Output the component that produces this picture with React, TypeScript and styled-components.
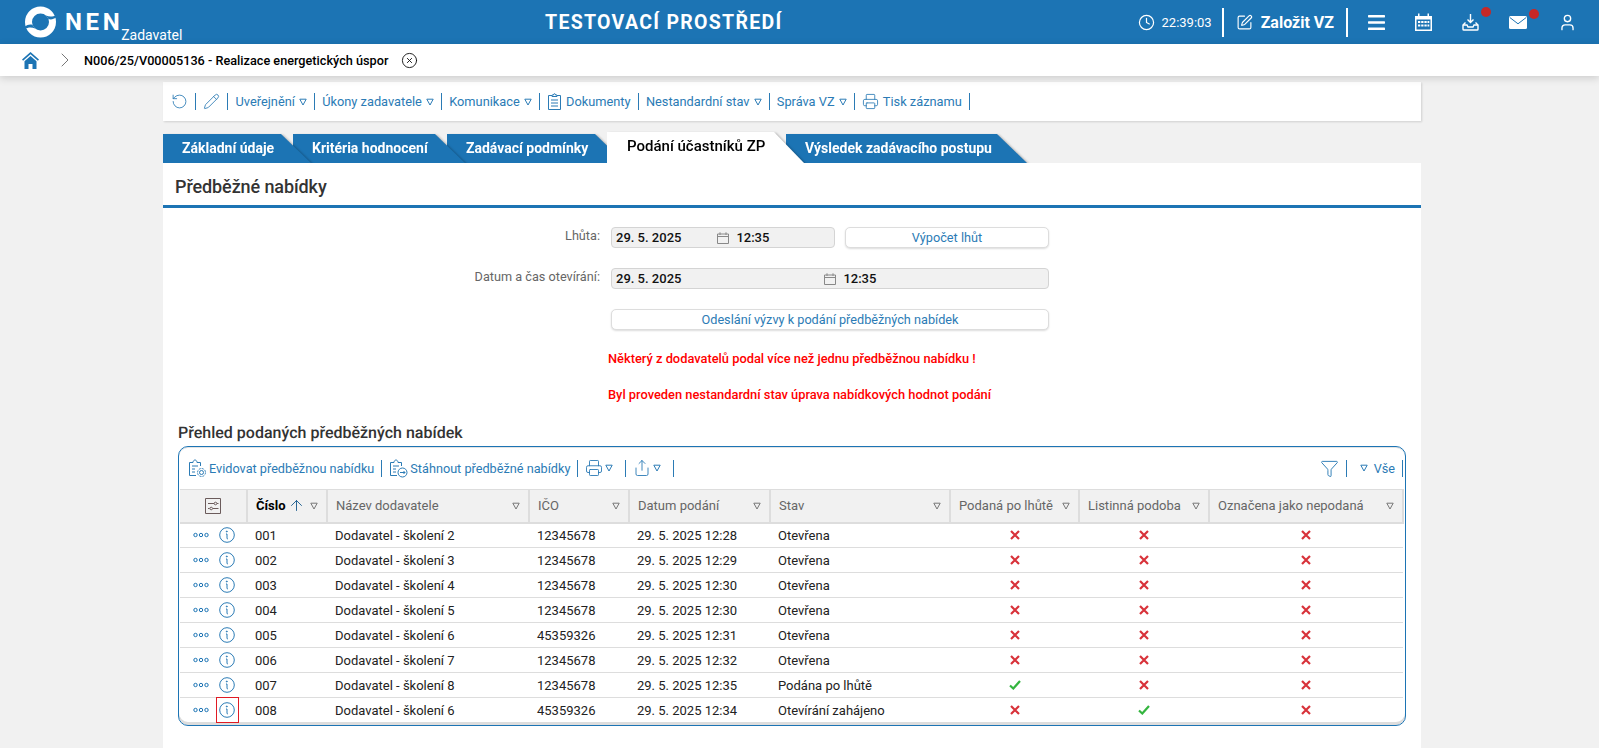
import React from "react";
import styled, { createGlobalStyle } from "styled-components";
import {
  ArrowUp, ChevronRight, CircleX, Clock, Funnel, Pencil, Printer, RotateCcw, Share, SquarePen, User,
} from "lucide-react";

const BLUE = "#1c74b4";
const LINK = "#2b7bb5";

const GlobalStyle = createGlobalStyle`
  html, body { margin: 0; padding: 0; background: #f1f1f1; }
  body { font-family: Roboto, "Liberation Sans", sans-serif; font-size: 13px; color: #222; overflow: hidden; }
`;

const Page = styled.div`
  width: 1599px;
  height: 748px;
  overflow: hidden;
  display: flex;
  flex-direction: column;
`;

const TopBar = styled.header`
  height: 44px;
  flex: none;
  background: ${BLUE};
  color: #fff;
  display: flex;
  align-items: center;
`;

const Brand = styled.div`
  width: 545px;
  flex: none;
  height: 44px;
  padding-left: 25px;
  box-sizing: border-box;
  display: flex;
  align-items: center;
`;

const BrandName = styled.span`
  margin-left: 9px;
  font-size: 24px;
  font-weight: 700;
  letter-spacing: 3.6px;
`;

const BrandRole = styled.span`
  align-self: flex-end;
  margin-left: -2px;
  padding-bottom: 1px;
  font-size: 14px;
  line-height: 16px;
`;

const EnvTitle = styled.div`
  font-size: 19.5px;
  font-weight: 700;
  letter-spacing: 1.3px;
`;

const TopActions = styled.div`
  margin-left: auto;
  padding-right: 22px;
  display: flex;
  align-items: center;
  height: 44px;
`;

const ClockText = styled.span`
  margin: 0 10px 0 7px;
  font-size: 13px;
`;

const TopDivider = styled.span`
  width: 2px;
  height: 29px;
  background: #fff;
`;

const CreateLabel = styled.span`
  margin: 0 12px 0 8px;
  font-size: 16px;
  font-weight: 700;
`;

const TopIcon = styled.span<{ $gap: number; $badge?: boolean }>`
  position: relative;
  margin-left: ${(p) => p.$gap}px;
  display: flex;
  &::after {
    content: "";
    display: ${(p) => (p.$badge ? "block" : "none")};
    position: absolute;
    top: -7px;
    right: -12px;
    width: 10px;
    height: 10px;
    border-radius: 50%;
    background: #c62828;
  }
`;

const Crumbs = styled.nav`
  height: 32px;
  flex: none;
  background: #fff;
  box-shadow: 0 2px 8px rgba(0, 0, 0, 0.16);
  display: flex;
  align-items: center;
  padding-left: 22px;
  position: relative;
  z-index: 2;
`;

const CrumbChevron = styled.span`
  margin: 0 7px 0 14px;
  display: flex;
  color: #777;
`;

const CrumbText = styled.span`
  font-size: 12.7px;
  font-weight: 500;
  color: #000;
  margin-right: 13px;
`;

const CloseIcon = styled(CircleX)`
  color: #111;
`;

const Main = styled.main`
  width: 1258px;
  margin: 6px 0 0 163px;
  flex: 1;
  display: flex;
  flex-direction: column;
`;

const Toolbar = styled.div`
  height: 39px;
  flex: none;
  background: #fff;
  box-shadow: 1px 1px 2px rgba(0, 0, 0, 0.14);
  display: flex;
  align-items: center;
  padding-left: 8px;
`;

const ToolItem = styled.span`
  display: flex;
  align-items: center;
  gap: 4px;
  color: ${LINK};
  font-size: 12.8px;
  white-space: nowrap;
  padding: 0 7.15px;
  height: 17px;
  border-right: 1px solid ${LINK};
  &:first-child { padding-left: 0; }
`;

const TabRow = styled.div`
  margin-top: 12px;
  height: 30px;
  flex: none;
  display: flex;
  align-items: flex-end;
`;

const Tab = styled.div<{ $active?: boolean; $width: number; $z: number }>`
  position: relative;
  z-index: ${(p) => p.$z};
  flex: none;
  width: ${(p) => p.$width}px;
  margin-right: -${(p) => p.$width - (p.$active ? 179 : p.$width - 18)}px;
  height: ${(p) => (p.$active ? 31 : 29)}px;
  filter: drop-shadow(2px 1px 1px rgba(0, 0, 0, 0.28));
  font-size: ${(p) => (p.$active ? 15 : 14)}px;
  font-weight: ${(p) => (p.$active ? 500 : 700)};
  color: ${(p) => (p.$active ? "#000" : "#fff")};
  line-height: 29px;
  &::before {
    content: "";
    position: absolute;
    inset: 0;
    background: ${(p) => (p.$active ? "#fff" : BLUE)};
    clip-path: polygon(0 0, calc(100% - 30px) 0, 100% 100%, 0 100%);
  }
  & > span { position: relative; margin-left: ${(p) => (p.$active ? 20 : 19)}px; }
`;

const Sheet = styled.section`
  flex: 1;
  background: #fff;
  position: relative;
  z-index: 8;
  display: flex;
  flex-direction: column;
`;

const SheetTitle = styled.h1`
  margin: 0;
  height: 42px;
  flex: none;
  border-bottom: 3px solid ${BLUE};
  padding-left: 12px;
  font-size: 18px;
  font-weight: 500;
  letter-spacing: -0.1px;
  line-height: 48px;
  color: #333;
`;

const Form = styled.div`
  display: grid;
  grid-template-columns: 448px 224px 10px 204px;
  grid-auto-rows: 21px;
  row-gap: 20px;
  align-items: center;
  margin-top: 19px;
`;

const FieldLabel = styled.label`
  grid-column: 1;
  text-align: right;
  color: #666;
  font-size: 12.7px;
  padding-right: 11px;
  margin-top: -5px;
`;

const DateInput = styled.div<{ $wide?: boolean; $gap: number }>`
  grid-column: ${(p) => (p.$wide ? "2 / 5" : "2")};
  height: 21px;
  box-sizing: border-box;
  background: #f1f1f1;
  border: 1px solid #d4d4d4;
  border-radius: 4px;
  display: flex;
  align-items: center;
  padding-left: 4px;
  font-size: 13px;
  font-weight: 500;
  color: #111;
  & > svg { margin-left: ${(p) => p.$gap}px; margin-right: 7px; color: #888; }
`;

const GhostButton = styled.button<{ $wide?: boolean }>`
  grid-column: ${(p) => (p.$wide ? "2 / 5" : "4")};
  height: 21px;
  padding: 0;
  background: #fff;
  border: 1px solid #ddd;
  border-radius: 5px;
  box-shadow: 0 1px 2px rgba(0, 0, 0, 0.14);
  color: ${LINK};
  font: 400 12.7px Roboto, sans-serif;
`;

const Messages = styled.div`
  margin: 21px 0 0 445px;
  display: flex;
  flex-direction: column;
  gap: 21px;
`;

const Warning = styled.p`
  margin: 0;
  color: #f00;
  font-size: 12.85px;
  font-weight: 500;
  line-height: 15px;
`;

const GridTitle = styled.h2`
  margin: 21px 0 0 15px;
  font-size: 16px;
  font-weight: 500;
  text-rendering: geometricPrecision;
  line-height: 20px;
  color: #333;
`;

const GridPanel = styled.div`
  margin: 3px 15px 0 15px;
  height: 280px;
  box-sizing: border-box;
  border: 1.5px solid ${BLUE};
  border-radius: 10px;
  box-shadow: inset 0 -3px 0 #ddd, inset 0 1px 0 #e4e4e4;
  padding: 0 1px;
  overflow: hidden;
`;

const GridBar = styled.div`
  height: 42px;
  display: flex;
  align-items: center;
  justify-content: space-between;
  padding: 0 1px 0 8px;
`;

const GridTools = styled.div`
  display: flex;
  align-items: center;
`;

const GridTool = styled.span<{ $menu?: boolean }>`
  display: flex;
  align-items: center;
  gap: 2px;
  height: 17px;
  padding: 0 ${(p) => (p.$menu ? 12 : 7)}px 0 7px;
  border-right: 1px solid ${LINK};
  color: ${LINK};
  font-size: 12.7px;
  white-space: nowrap;
  &:first-child { padding-left: 0; }
`;

const FilterTools = styled(GridTools)`
  & > span:last-child { padding-left: 13px; }
`;

const Table = styled.table`
  width: 1223px;
  table-layout: fixed;
  border-collapse: collapse;
`;

const HeadCell = styled.th<{ $sorted?: boolean }>`
  height: 33px;
  box-sizing: border-box;
  background: #f1f1f1;
  border: 1px solid #ddd;
  border-width: 1px 2px 2px 0;
  padding: 0 8px;
  text-align: left;
  font-size: 13px;
  font-weight: ${(p) => (p.$sorted ? 700 : 400)};
  color: ${(p) => (p.$sorted ? "#000" : "#666")};
`;

const HeadInner = styled.div`
  display: flex;
  align-items: center;
  justify-content: space-between;
`;

const HeadIconWrap = styled.div`
  display: flex;
  justify-content: center;
`;

const Row = styled.tr`
  height: 25px;
  border-bottom: 1px solid #ddd;
  &:last-child { border-bottom: 0; }
`;

const Cell = styled.td<{ $center?: boolean }>`
  padding: 0 8px;
  box-sizing: border-box;
  font-size: 13px;
  color: #222;
  white-space: nowrap;
  text-align: ${(p) => (p.$center ? "center" : "left")};
  & > svg { vertical-align: middle; margin-bottom: 3px; }
`;

const ActionCell = styled.td`
  padding: 0;
`;

const ActionWrap = styled.div`
  display: flex;
  align-items: center;
  padding-left: 13px;
  gap: 10px;
`;

const InfoBox = styled.span<{ $marked?: boolean }>`
  position: relative;
  display: flex;
  &::after {
    content: "";
    display: ${(p) => (p.$marked ? "block" : "none")};
    position: absolute;
    inset: -5px -4px -5px -3px;
    border: 1px solid #e01b24;
  }
`;

const ArrowIcon = styled(ArrowUp)`
  margin-left: 2px;
  color: #17598c;
`;

const SortWrap = styled.span`
  display: flex;
  align-items: center;
`;

const HeadTri = styled.span`
  display: flex;
  color: #777;
  margin-left: 4px;
`;

const Logo = () => (
  <svg width="31" height="32" viewBox="0 0 31 32">
    <circle cx="15.500" cy="16" r="15.500" fill="#fff" />
    <circle cx="15.500" cy="16" r="8.500" fill={BLUE} />
    <path fill={BLUE} d="M31 9C28 11 24 11 21 9.500L23.500 13C26 14 29 13 31 11.500Z" />
    <path fill={BLUE} d="M0 23C3 21 7 21 10 22.500L7.500 19C5 18 2 19 0 20.500Z" />
  </svg>
);

const HomeIcon = () => (
  <svg width="17" height="17" viewBox="0 0 17 17">
    <path fill={BLUE} d="M8.500 0 0 7.500 1.100 8.800 8.500 2.300l7.400 6.500L17 7.500Z" />
    <path fill={BLUE} d="M2.500 9.200 8.500 4l6 5.200V17H10.500v-5h-4v5H2.500Z" />
  </svg>
);

const BarsIcon = () => (
  <svg width="17" height="15" viewBox="0 0 17 15" fill="#fff">
    <rect y="0" width="17" height="2.400" rx=".6" />
    <rect y="6.300" width="17" height="2.400" rx=".6" />
    <rect y="12.600" width="17" height="2.400" rx=".6" />
  </svg>
);

const CalendarIcon = () => (
  <svg width="17" height="18" viewBox="0 0 17 18">
    <path fill="#fff" d="M0 3h3V.5h1.500V3h8V.5H14V3h3v15H0Z" />
    <path fill={BLUE} d="M1.500 6.500h14V16.500h-14Z" />
    <path fill="#fff" d="M3 8h2.300v2H3ZM6.200 8h2.300v2H6.200ZM9.400 8h2.300v2H9.400ZM12.500 8h1.800v2h-1.800ZM3 11.500h2.300v2H3ZM6.200 11.500h2.300v2H6.200ZM9.400 11.500h2.300v2H9.400ZM12.500 11.500h1.800v2h-1.800Z" />
  </svg>
);

const TrayIcon = () => (
  <svg width="17" height="17" viewBox="0 0 17 17" fill="none" stroke="#fff" strokeWidth="1.400">
    <path d="M8.500 0v8M5.500 5.500l3 3 3-3" />
    <path d="M3.500 8.500 1 11v4.200c0 .5.300.8.800.8h13.400c.5 0 .8-.3.800-.8V11l-2.500-2.500" />
    <path d="M1 11h4l1 2h5l1-2h4" />
  </svg>
);

const MailIcon = () => (
  <svg width="18" height="13" viewBox="0 0 18 13">
    <rect width="18" height="13" rx="1.500" fill="#fff" />
    <path d="M.8 1.500 9 7.800l8.200-6.300" fill="none" stroke={BLUE} strokeWidth="1" />
  </svg>
);

const Tri = ({ size = 8 }: { size?: number }) => (
  <svg width={size} height={size} viewBox="0 0 8 8" fill="none" stroke="currentColor" strokeWidth="1">
    <path d="M.8 1.200h6.400L4 7Z" />
  </svg>
);

const SmallCalendar = () => (
  <svg width="12" height="12" viewBox="0 0 12 12" fill="none" stroke="currentColor" strokeWidth="1">
    <path d="M.5 2h11v9.500H.5ZM.5 4.500h11M3 .3V3M9 .3V3" />
  </svg>
);

const Dots = () => (
  <svg width="16" height="6" viewBox="0 0 16 6" fill="none" stroke={BLUE} strokeWidth="1">
    <circle cx="2.500" cy="3" r="1.700" />
    <circle cx="8" cy="3" r="1.700" />
    <circle cx="13.500" cy="3" r="1.700" />
  </svg>
);

const InfoIcon = () => (
  <svg width="16" height="16" viewBox="0 0 16 16" fill="none" stroke={LINK} strokeWidth="1">
    <circle cx="8" cy="8" r="7.300" />
    <circle cx="7.800" cy="4.500" r=".5" fill={LINK} />
    <path d="M7 7h1v4.200c0 .6.400.8 1 .7" />
  </svg>
);

const Cross = () => (
  <svg width="10" height="10" viewBox="0 0 10 10" fill="none" stroke="#d8323a" strokeWidth="2.200">
    <path d="M1 1l8 8M9 1l-8 8" />
  </svg>
);

const Tick = () => (
  <svg width="12" height="10" viewBox="0 0 12 10" fill="none" stroke="#34b53f" strokeWidth="2.200">
    <path d="M1 5.500 4.300 8.500 11 1" />
  </svg>
);

const ColumnsIcon = () => (
  <svg width="16" height="16" viewBox="0 0 16 16" fill="none" stroke="#6b5b5b" strokeWidth="1">
    <path d="M.5.500h15v15H.5Z" />
    <path d="M3 5.500h6M12 5.500h1.500M3 10.500h1.500M8 10.500h5.500" />
    <circle cx="10.500" cy="5.500" r="1.300" />
    <circle cx="6.200" cy="10.500" r="1.300" />
  </svg>
);

const ClipGear = () => (
  <svg width="19" height="19" viewBox="0 0 19 19" fill="none" stroke={LINK} strokeWidth="1">
    <path d="M8 16.500H1.500v-13H5c0-1.500 1-2.500 2-2.500s2 1 2 2.500h3.500V7" />
    <path d="M4 7h6M4 10h3M4 13h3" />
    <circle cx="13.500" cy="13.500" r="2" />
    <circle cx="13.500" cy="13.500" r="4" strokeDasharray="2 1.100" />
  </svg>
);

const ClipArrow = () => (
  <svg width="19" height="19" viewBox="0 0 19 19" fill="none" stroke={LINK} strokeWidth="1">
    <path d="M8 16.500H1.500v-13H5c0-1.500 1-2.500 2-2.500s2 1 2 2.500h3.500V7" />
    <path d="M4 7h6M4 10h3M4 13h3" />
    <circle cx="13.500" cy="13.500" r="4.500" />
    <path d="M11 13.500h5M14.500 12l1.500 1.500-1.500 1.500" />
  </svg>
);

const DocIcon = () => (
  <svg width="15" height="17" viewBox="0 0 14 17" fill="none" stroke={LINK} strokeWidth="1">
    <path d="M4.500 2.500H1v14h12v-14H9.500" />
    <path d="M4.500 3.500V2H6c0-1.800 2-1.800 2 0h1.500v1.500ZM3.500 7h7M3.500 10h7M3.500 13h7" />
  </svg>
);

const columns = [
  { title: "Číslo", width: 80 },
  { title: "Název dodavatele", width: 202 },
  { title: "IČO", width: 100 },
  { title: "Datum podání", width: 141 },
  { title: "Stav", width: 180 },
  { title: "Podaná po lhůtě", width: 129 },
  { title: "Listinná podoba", width: 130 },
  { title: "Označena jako nepodaná", width: 194 },
];

const rows = [
  ["001", "Dodavatel - školení 2", "12345678", "29. 5. 2025 12:28", "Otevřena", false, false, false],
  ["002", "Dodavatel - školení 3", "12345678", "29. 5. 2025 12:29", "Otevřena", false, false, false],
  ["003", "Dodavatel - školení 4", "12345678", "29. 5. 2025 12:30", "Otevřena", false, false, false],
  ["004", "Dodavatel - školení 5", "12345678", "29. 5. 2025 12:30", "Otevřena", false, false, false],
  ["005", "Dodavatel - školení 6", "45359326", "29. 5. 2025 12:31", "Otevřena", false, false, false],
  ["006", "Dodavatel - školení 7", "12345678", "29. 5. 2025 12:32", "Otevřena", false, false, false],
  ["007", "Dodavatel - školení 8", "12345678", "29. 5. 2025 12:35", "Podána po lhůtě", true, false, false],
  ["008", "Dodavatel - školení 6", "45359326", "29. 5. 2025 12:34", "Otevírání zahájeno", false, true, false],
] as const;

const tabs = [
  { label: "Základní údaje", width: 148 },
  { label: "Kritéria hodnocení", width: 172 },
  { label: "Zadávací podmínky", width: 178 },
  { label: "Podání účastníků ZP", width: 197, active: true },
  { label: "Výsledek zadávacího postupu", width: 241 },
];

const menu = [
  { label: "Uveřejnění", tri: true },
  { label: "Úkony zadavatele", tri: true },
  { label: "Komunikace", tri: true },
  { label: "Dokumenty", icon: <DocIcon /> },
  { label: "Nestandardní stav", tri: true },
  { label: "Správa VZ", tri: true },
  { label: "Tisk záznamu", icon: <Printer size={17} strokeWidth={1.2} /> },
];

export default function App() {
  return (
    <Page>
      <GlobalStyle />
      <TopBar>
        <Brand>
          <Logo />
          <BrandName>NEN</BrandName>
          <BrandRole>Zadavatel</BrandRole>
        </Brand>
        <EnvTitle>TESTOVACÍ PROSTŘEDÍ</EnvTitle>
        <TopActions>
          <Clock size={17} strokeWidth={1.7} />
          <ClockText>22:39:03</ClockText>
          <TopDivider />
          <TopIcon $gap={12}><SquarePen size={17} strokeWidth={1.6} /></TopIcon>
          <CreateLabel>Založit VZ</CreateLabel>
          <TopDivider />
          <TopIcon $gap={20}><BarsIcon /></TopIcon>
          <TopIcon $gap={30}><CalendarIcon /></TopIcon>
          <TopIcon $gap={30} $badge><TrayIcon /></TopIcon>
          <TopIcon $gap={30} $badge><MailIcon /></TopIcon>
          <TopIcon $gap={31}><User size={19} strokeWidth={1.7} /></TopIcon>
        </TopActions>
      </TopBar>

      <Crumbs>
        <HomeIcon />
        <CrumbChevron><ChevronRight size={24} strokeWidth={1} /></CrumbChevron>
        <CrumbText>N006/25/V00005136 - Realizace energetických úspor</CrumbText>
        <CloseIcon size={17} strokeWidth={1.3} />
      </Crumbs>

      <Main>
        <Toolbar>
          <ToolItem><RotateCcw size={17} strokeWidth={1.2} /></ToolItem>
          <ToolItem><Pencil size={17} strokeWidth={1.2} /></ToolItem>
          {menu.map((m) => (
            <ToolItem key={m.label}>
              {m.icon}
              {m.label}
              {m.tri && <Tri />}
            </ToolItem>
          ))}
        </Toolbar>

        <TabRow>
          {tabs.map((t, i) => (
            <Tab key={t.label} $active={t.active} $width={t.width} $z={t.active ? 7 : 6 - i}>
              <span>{t.label}</span>
            </Tab>
          ))}
        </TabRow>

        <Sheet>
          <SheetTitle>Předběžné nabídky</SheetTitle>
          <Form>
            <FieldLabel>Lhůta:</FieldLabel>
            <DateInput $gap={36}>
              29. 5. 2025
              <SmallCalendar />
              12:35
            </DateInput>
            <GhostButton>Výpočet lhůt</GhostButton>
            <FieldLabel>Datum a čas otevírání:</FieldLabel>
            <DateInput $wide $gap={143}>
              29. 5. 2025
              <SmallCalendar />
              12:35
            </DateInput>
            <span />
            <GhostButton $wide>Odeslání výzvy k podání předběžných nabídek</GhostButton>
          </Form>
          <Messages>
            <Warning>Některý z dodavatelů podal více než jednu předběžnou nabídku !</Warning>
            <Warning>Byl proveden nestandardní stav úprava nabídkových hodnot podání</Warning>
          </Messages>

          <GridTitle>Přehled podaných předběžných nabídek</GridTitle>
          <GridPanel>
            <GridBar>
              <GridTools>
                <GridTool><ClipGear />Evidovat předběžnou nabídku</GridTool>
                <GridTool><ClipArrow />Stáhnout předběžné nabídky</GridTool>
                <GridTool $menu><Printer size={18} strokeWidth={1.2} /><Tri /></GridTool>
                <GridTool $menu><Share size={18} strokeWidth={1.2} /><Tri /></GridTool>
              </GridTools>
              <FilterTools>
                <GridTool><Funnel size={19} strokeWidth={1.2} /></GridTool>
                <GridTool><Tri /><span>&nbsp;Vše</span></GridTool>
              </FilterTools>
            </GridBar>
            <Table>
              <colgroup>
                <col width={67} />
                {columns.map((c) => <col key={c.title} width={c.width} />)}
              </colgroup>
              <thead>
                <tr>
                  <HeadCell><HeadIconWrap><ColumnsIcon /></HeadIconWrap></HeadCell>
                  {columns.map((c, i) => (
                    <HeadCell key={c.title} $sorted={i === 0}>
                      <HeadInner>
                        <SortWrap>
                          {c.title}
                          {i === 0 && <ArrowIcon size={17} strokeWidth={1.3} />}
                        </SortWrap>
                        <HeadTri><Tri /></HeadTri>
                      </HeadInner>
                    </HeadCell>
                  ))}
                </tr>
              </thead>
              <tbody>
                {rows.map((r, i) => (
                  <Row key={r[0]}>
                    <ActionCell>
                      <ActionWrap>
                        <Dots />
                        <InfoBox $marked={i === rows.length - 1}><InfoIcon /></InfoBox>
                      </ActionWrap>
                    </ActionCell>
                    <Cell>{r[0]}</Cell>
                    <Cell>{r[1]}</Cell>
                    <Cell>{r[2]}</Cell>
                    <Cell>{r[3]}</Cell>
                    <Cell>{r[4]}</Cell>
                    <Cell $center>{r[5] ? <Tick /> : <Cross />}</Cell>
                    <Cell $center>{r[6] ? <Tick /> : <Cross />}</Cell>
                    <Cell $center>{r[7] ? <Tick /> : <Cross />}</Cell>
                  </Row>
                ))}
              </tbody>
            </Table>
          </GridPanel>
        </Sheet>
      </Main>
    </Page>
  );
}
